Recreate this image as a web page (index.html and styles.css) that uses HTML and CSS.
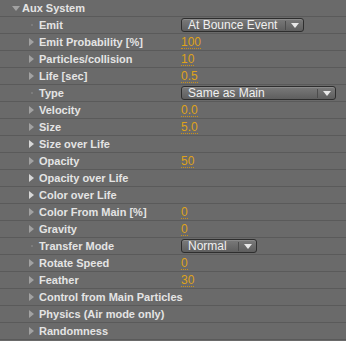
FILE: index.html
```html
<!DOCTYPE html>
<html>
<head>
    <meta charset="UTF-8">
    <title>Aux System</title>
    <link rel="stylesheet" href="styles.css">
</head>
<body>
    <div class="panel">
        <div class="row group">
            <span class="twirl open"></span>
            <span class="label">Aux System</span>
        </div>
        <div class="row">
            <span class="dot"></span>
            <span class="label">Emit</span>
            <div class="value"><div class="dropdown w-bounce"><span class="dd-text">At Bounce Event</span><span class="dd-arrow"></span></div></div>
        </div>
        <div class="row">
            <span class="twirl"></span>
            <span class="label">Emit Probability [%]</span>
            <div class="value"><span class="num">100</span></div>
        </div>
        <div class="row">
            <span class="twirl"></span>
            <span class="label">Particles/collision</span>
            <div class="value"><span class="num">10</span></div>
        </div>
        <div class="row">
            <span class="twirl"></span>
            <span class="label">Life [sec]</span>
            <div class="value"><span class="num">0.5</span></div>
        </div>
        <div class="row">
            <span class="dot"></span>
            <span class="label">Type</span>
            <div class="value"><div class="dropdown w-type"><span class="dd-text">Same as Main</span><span class="dd-arrow"></span></div></div>
        </div>
        <div class="row">
            <span class="twirl"></span>
            <span class="label">Velocity</span>
            <div class="value"><span class="num">0.0</span></div>
        </div>
        <div class="row">
            <span class="twirl"></span>
            <span class="label">Size</span>
            <div class="value"><span class="num">5.0</span></div>
        </div>
        <div class="row">
            <span class="twirl bright"></span>
            <span class="label">Size over Life</span>
        </div>
        <div class="row">
            <span class="twirl"></span>
            <span class="label">Opacity</span>
            <div class="value"><span class="num">50</span></div>
        </div>
        <div class="row">
            <span class="twirl bright"></span>
            <span class="label">Opacity over Life</span>
        </div>
        <div class="row">
            <span class="twirl bright"></span>
            <span class="label">Color over Life</span>
        </div>
        <div class="row">
            <span class="twirl"></span>
            <span class="label">Color From Main [%]</span>
            <div class="value"><span class="num">0</span></div>
        </div>
        <div class="row">
            <span class="twirl"></span>
            <span class="label">Gravity</span>
            <div class="value"><span class="num">0</span></div>
        </div>
        <div class="row">
            <span class="dot"></span>
            <span class="label">Transfer Mode</span>
            <div class="value"><div class="dropdown w-mode"><span class="dd-text">Normal</span><span class="dd-arrow"></span></div></div>
        </div>
        <div class="row">
            <span class="twirl"></span>
            <span class="label">Rotate Speed</span>
            <div class="value"><span class="num">0</span></div>
        </div>
        <div class="row">
            <span class="twirl"></span>
            <span class="label">Feather</span>
            <div class="value"><span class="num">30</span></div>
        </div>
        <div class="row">
            <span class="twirl"></span>
            <span class="label">Control from Main Particles</span>
        </div>
        <div class="row">
            <span class="twirl"></span>
            <span class="label">Physics (Air mode only)</span>
        </div>
        <div class="row">
            <span class="twirl"></span>
            <span class="label">Randomness</span>
        </div>
    </div>
</body>
</html>
```

FILE: styles.css
```css
body {
    margin: 0;
    background: #6a6a6a;
    font-family: "Liberation Sans", Arial, sans-serif;
    font-size: 11px;
    font-weight: bold;
    color: #e4e4e4;
}

.panel {
    width: 346px;
    height: 341px;
    overflow: hidden;
}

.row {
    display: flex;
    align-items: center;
    height: 17px;
    box-sizing: border-box;
    border-bottom: 1px solid #5a5a5a;
    padding-left: 29px;
}

.row.group {
    padding-left: 12px;
}

.label {
    width: 142px;
    padding-left: 4px;
    white-space: nowrap;
}

.group .label {
    padding-left: 3px;
}

.twirl {
    width: 6px;
    height: 8px;
    display: flex;
    align-items: center;
}

.twirl::before {
    content: '';
    border-left: 5px solid #a2a2a2;
    border-top: 4px solid transparent;
    border-bottom: 4px solid transparent;
}

.twirl.bright::before {
    border-left-color: #d8d8d8;
}

.twirl.open {
    width: 7px;
}

.twirl.open::before {
    border-left: 4px solid transparent;
    border-right: 4px solid transparent;
    border-top: 5px solid #a2a2a2;
    border-bottom: none;
}

.dot {
    width: 6px;
    height: 8px;
    display: flex;
    align-items: center;
    justify-content: center;
}

.dot::before {
    content: '';
    width: 2px;
    height: 2px;
    background: #7c7c7c;
}

.value {
    display: flex;
    align-items: center;
}

.num {
    color: #dea21a;
    font-weight: normal;
    font-size: 12px;
    line-height: 12px;
    border-bottom: 1px dotted #c8901a;
}

.dropdown {
    display: flex;
    align-items: center;
    height: 14px;
    box-sizing: border-box;
    border: 1px solid #2e2e2e;
    border-radius: 3px;
    background: linear-gradient(#7a7a7a, #5e5e5e);
    box-shadow: inset 0 1px 0 #8a8a8a;
    color: #f0f0f0;
    font-weight: normal;
    font-size: 12px;
}

.w-bounce { width: 123px; }
.w-type { width: 155px; }
.w-mode { width: 76px; }

.dd-text {
    flex: 1;
    padding-left: 6px;
    line-height: 12px;
    white-space: nowrap;
}

.dd-arrow {
    width: 17px;
    height: 9px;
    border-left: 1px solid #4c4c4c;
    display: flex;
    align-items: center;
    justify-content: center;
}

.dd-arrow::before {
    content: '';
    border-left: 4px solid transparent;
    border-right: 4px solid transparent;
    border-top: 5px solid #e8e8e8;
}
```
